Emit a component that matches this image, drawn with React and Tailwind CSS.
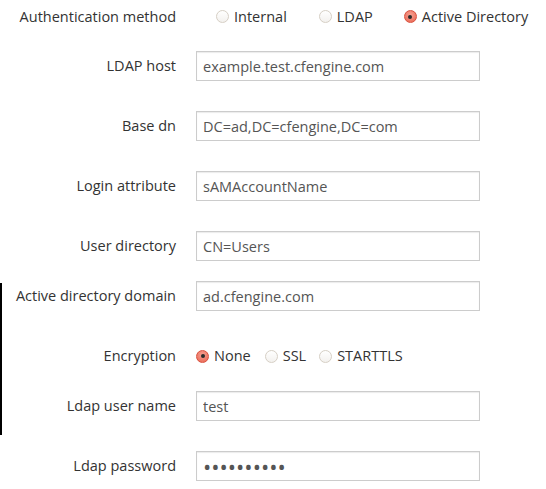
import React from "react";

function Radio({ checked }) {
  if (checked) {
    return (
      <span className="flex h-[13px] w-[13px] shrink-0 items-center justify-center rounded-full border border-[#d9523f] bg-[radial-gradient(circle_at_50%_35%,#f7a193,#e8634f)]">
        <span className="h-[4px] w-[4px] rounded-full bg-[#2b2b2b]" />
      </span>
    );
  }
  return (
    <span className="h-[13px] w-[13px] shrink-0 rounded-full border border-[#d6cfc5] bg-[linear-gradient(#ffffff,#f3f1ee)]" />
  );
}

function Option({ label, checked, className = "" }) {
  return (
    <label className={`flex items-center gap-[5px] ${className}`}>
      <Radio checked={checked} />
      <span>{label}</span>
    </label>
  );
}

function Row({ label, children, className = "" }) {
  return (
    <div className={`flex h-[30px] items-center gap-[20px] ${className}`}>
      <div className="w-[176px] shrink-0 text-right text-[#333]">{label}</div>
      {children}
    </div>
  );
}

function Field({ value, type = "text" }) {
  const size = type === "password" ? "text-[22px]" : "text-[14.5px]";
  return (
    <input
      type={type}
      readOnly
      value={value}
      className={`h-[30px] w-[284px] border border-[#cccccc] bg-white px-[6px] text-[#555] shadow-[inset_0_1px_1px_rgba(0,0,0,0.08)] outline-none ${size}`}
    />
  );
}

export default function App() {
  return (
    <div
      className="relative h-[489px] w-[546px] bg-white text-[14.5px] text-[#333]"
      style={{ fontFamily: '"Open Sans", "Noto Sans", sans-serif' }}
    >
      {/* stray left rule */}
      <div className="absolute left-0 top-[283px] h-[152px] w-[2px] bg-black" />

      <div className="flex h-[33px] items-center gap-[20px]">
        <div className="w-[176px] shrink-0 text-right">Authentication method</div>
        <div className="ml-[20px] flex items-center">
          <Option label="Internal" />
          <Option label="LDAP" className="ml-[32px]" />
          <Option label="Active Directory" checked className="ml-[31px]" />
        </div>
      </div>

      <Row label="LDAP host" className="mt-[18px]">
        <Field value="example.test.cfengine.com" />
      </Row>
      <Row label="Base dn" className="mt-[30px]">
        <Field value="DC=ad,DC=cfengine,DC=com" />
      </Row>
      <Row label="Login attribute" className="mt-[30px]">
        <Field value="sAMAccountName" />
      </Row>
      <Row label="User directory" className="mt-[30px]">
        <Field value="CN=Users" />
      </Row>
      <Row label="Active directory domain" className="mt-[20px]">
        <Field value="ad.cfengine.com" />
      </Row>
      <Row label="Encryption" className="mt-[30px]">
        <div className="flex items-center">
          <Option label="None" checked />
          <Option label="SSL" className="ml-[14px]" />
          <Option label="STARTTLS" className="ml-[13px]" />
        </div>
      </Row>
      <Row label="Ldap user name" className="mt-[20px]">
        <Field value="test" />
      </Row>
      <Row label="Ldap password" className="mt-[30px]">
        <Field type="password" value="abcdefghij" />
      </Row>
    </div>
  );
}
